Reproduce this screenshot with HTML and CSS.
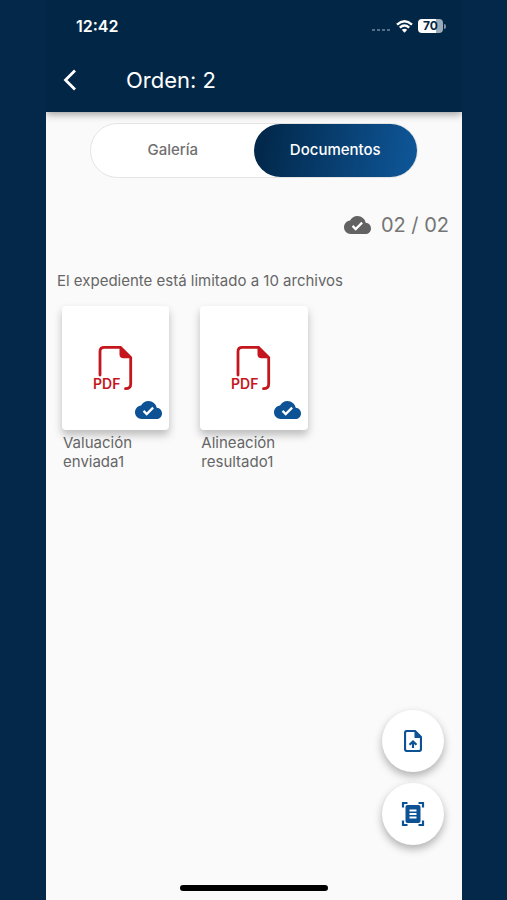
FILE: index.html
```html
<!DOCTYPE html>
<html lang="es">
<head>
  <meta charset="UTF-8">
  <meta name="viewport" content="width=device-width, initial-scale=1.0">
  <title>Orden: 2</title>
  <link rel="stylesheet" href="styles.css">
</head>
<body>
  <svg class="symbols" aria-hidden="true">
    <symbol id="cloud-done" viewBox="0 4 24 16">
      <path fill="currentColor" d="M19.35 10.04C18.67 6.59 15.64 4 12 4 9.11 4 6.6 5.64 5.35 8.04 2.34 8.36 0 10.91 0 14c0 3.31 2.69 6 6 6h13c2.76 0 5-2.24 5-5 0-2.64-2.05-4.78-4.65-4.96z"/>
      <path fill="none" stroke="#fff" stroke-width="2" d="M7.6 12.800l2.800 2.800 5.700-5.700"/>
    </symbol>
    <symbol id="pdf" viewBox="0 0 42 46">
      <path fill="none" stroke="#c4161c" stroke-width="2.8" stroke-linecap="round" d="M8 30V6.500Q8 2.300 12.200 2.300H28.500L38.700 12.500V39Q38.700 43.700 33.500 43.700"/>
      <path fill="#c4161c" d="M27.500 1.500L39.800 13.300H31.500Q27.500 13.300 27.500 9.300z"/>
    </symbol>
  </svg>

  <div class="phone">
    <header>
      <div class="status-bar">
        <span class="time">12:42</span>
        <div class="status-icons">
          <svg width="19" height="4" viewBox="0 0 19 4" fill="#566f88">
            <rect x="0" y="1" width="3" height="2"/><rect x="5" y="1" width="3" height="2"/><rect x="10" y="1" width="3" height="2"/><rect x="15" y="1" width="3" height="2"/>
          </svg>
          <svg class="wifi" width="17" height="13" viewBox="0 0 17 13" fill="none" stroke="#fff" stroke-width="2.400">
            <path d="M1 4.600Q8.500-2 16 4.600"/>
            <path d="M3.800 7.700Q8.500 3.500 13.200 7.700"/>
            <path fill="#fff" stroke="none" d="M5.800 9.800Q8.500 7.600 11.200 9.800L8.500 12.800z"/>
          </svg>
          <div class="battery"><span>70</span></div>
        </div>
      </div>
      <div class="title-bar">
        <button type="button" class="back" aria-label="Volver">
          <svg width="14" height="22" viewBox="0 0 14 22" fill="none" stroke="#fff" stroke-width="2.800">
            <path d="M12 1.500L2.500 11l9.500 9.500"/>
          </svg>
        </button>
        <h1>Orden: 2</h1>
      </div>
    </header>

    <main>
      <div class="tabs">
        <button type="button" class="tab">Galería</button>
        <button type="button" class="tab active">Documentos</button>
      </div>

      <div class="counter">
        <svg width="27" height="18"><use href="#cloud-done"/></svg>
        <span>02 / 02</span>
      </div>

      <p class="limit">El expediente está limitado a 10 archivos</p>

      <div class="files">
        <div class="file">
          <div class="card">
            <svg width="42" height="46">
              <use href="#pdf"/>
              <text x="1" y="44" class="pdf-text">PDF</text>
            </svg>
            <svg class="uploaded" width="27" height="18"><use href="#cloud-done"/></svg>
          </div>
          <p>Valuación enviada1</p>
        </div>
        <div class="file">
          <div class="card">
            <svg width="42" height="46">
              <use href="#pdf"/>
              <text x="1" y="44" class="pdf-text">PDF</text>
            </svg>
            <svg class="uploaded" width="27" height="18"><use href="#cloud-done"/></svg>
          </div>
          <p>Alineación resultado1</p>
        </div>
      </div>

      <div class="actions">
        <button type="button" class="fab" aria-label="Subir archivo">
          <svg width="18" height="22" viewBox="0 0 18 22" fill="none" stroke="#0d5294" stroke-width="2.200">
            <path d="M3 1H11L17 7V19Q17 21 15 21H3Q1 21 1 19V3Q1 1 3 1z"/>
            <path fill="#0d5294" stroke="none" d="M10.500 1L17.500 8H10.500z"/>
            <path d="M9 18V12.500M5.500 14.800L9 11.500l3.500 3.300"/>
          </svg>
        </button>
        <button type="button" class="fab" aria-label="Escanear documento">
          <svg width="24" height="26" viewBox="0 0 24 26" fill="none" stroke="#0d5294" stroke-width="2.200">
            <path d="M2 6.500V2H6.500M17.500 2H22V6.500M22 19.500V24H17.500M6.500 24H2V19.500"/>
            <rect x="4.500" y="4" width="15" height="18" rx="2" fill="#0d5294" stroke="none"/>
            <path stroke="#fff" stroke-width="2" d="M8.500 9.500h7M8.500 13h7M8.500 16.500h7"/>
          </svg>
        </button>
      </div>

      <div class="home-indicator"></div>
    </main>
  </div>
</body>
</html>
```

FILE: styles.css
```css
* {
  box-sizing: border-box;
}

body {
  margin: 0;
  background-color: #03284a;
  color: #666;
  font-family: Inter, "Liberation Sans", sans-serif;
}

h1,
p {
  margin: 0;
  font-weight: normal;
}

button {
  border: none;
  padding: 0;
  background: none;
  font-family: inherit;
  cursor: pointer;
}

.symbols {
  display: none;
}

.phone {
  display: flex;
  flex-direction: column;
  min-height: 100vh;
  margin: 0 45px 0 46px;
}

header {
  position: relative;
  padding: 16px 0 4px;
  background-color: #022746;
  color: #fff;
  box-shadow: 0 2px 8px rgba(0, 0, 0, 0.4);
  clip-path: inset(0 0 -16px 0);
}

.status-bar {
  display: flex;
  justify-content: space-between;
  align-items: center;
  height: 20px;
  padding: 0 16px 0 30px;
}

.time {
  font-size: 16px;
  font-weight: 600;
}

.status-icons {
  display: flex;
  align-items: center;
  gap: 5px;
}

.status-icons svg:first-child {
  margin-top: 8px;
}

.battery {
  display: flex;
  align-items: center;
}

.battery span {
  width: 25px;
  border-radius: 4px;
  background: linear-gradient(to right, #fff 72%, #9aabba 72%);
  color: #022746;
  font-size: 12px;
  font-weight: 700;
  line-height: 14px;
  text-align: center;
}

.battery::after {
  content: "";
  width: 2px;
  height: 5px;
  margin-left: 1px;
  border-radius: 0 2px 2px 0;
  background-color: #7f93a6;
}

.title-bar {
  display: flex;
  align-items: center;
  height: 56px;
  margin-top: 16px;
  padding-left: 17px;
}

.back {
  display: flex;
  width: 63px;
}

h1 {
  font-size: 22px;
}

main {
  display: flex;
  flex: 1;
  flex-direction: column;
  padding: 11px 11px 9px;
  background-color: #fafafa;
}

.tabs {
  display: flex;
  align-self: center;
  width: 83%;
  height: 55px;
  border: 1px solid #e4e4e4;
  border-radius: 28px;
  background-color: #fff;
}

.tab {
  flex: 1;
  padding-bottom: 3px;
  border-radius: 28px;
  color: #707070;
  font-size: 15px;
  font-weight: 500;
}

.tab.active {
  background: linear-gradient(100deg, #02284a 5%, #0e5596 95%);
  color: #fff;
}

.counter {
  display: flex;
  justify-content: flex-end;
  align-items: center;
  gap: 10px;
  margin-top: 33px;
  padding-right: 2px;
  color: #757575;
  font-size: 20px;
  line-height: 28px;
}

.counter svg {
  color: #626262;
}

.limit {
  margin-top: 32px;
  font-size: 15px;
  line-height: 20px;
}

.files {
  display: grid;
  grid-template-columns: repeat(3, 1fr);
  column-gap: 31px;
  margin-top: 15px;
  padding: 0 5px;
}

.card {
  position: relative;
  display: flex;
  justify-content: center;
  align-items: center;
  height: 124px;
  padding-right: 6px;
  border-radius: 4px;
  background-color: #fff;
  box-shadow: 0 5px 9px rgba(0, 0, 0, 0.25);
}

.pdf-text {
  fill: #c4161c;
  font-size: 14px;
  font-weight: 600;
}

.uploaded {
  position: absolute;
  right: 7px;
  bottom: 11px;
  color: #0d5294;
}

.file p {
  margin-top: 3px;
  padding-left: 1px;
  font-size: 15px;
  line-height: 19px;
}

.actions {
  display: flex;
  flex-direction: column;
  align-items: flex-end;
  gap: 11px;
  margin-top: auto;
  padding: 32px 7px 40px 0;
}

.fab {
  display: flex;
  justify-content: center;
  align-items: center;
  width: 62px;
  height: 62px;
  border-radius: 50%;
  background-color: #fff;
  box-shadow: 0 4px 8px rgba(0, 0, 0, 0.3);
}

.home-indicator {
  align-self: center;
  width: 148px;
  height: 6px;
  border-radius: 3px;
  background-color: #000;
}
```
